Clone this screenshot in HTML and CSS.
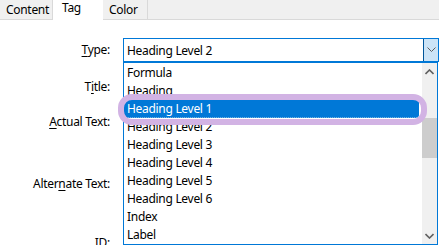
FILE: index.html
```html
<!DOCTYPE html>
<html lang="en">
<head>
    <meta charset="UTF-8">
    <title>Tag Properties</title>
    <link rel="stylesheet" href="styles.css">
</head>
<body>
    <div class="tabs">
        <div class="tab">Content</div>
        <div class="tab active">Tag</div>
        <div class="tab">Color</div>
        <div class="tab-fill"></div>
    </div>

    <div class="form">
        <label class="label"><u>T</u>ype:</label>
        <div class="field">
            <div class="combo">
                <span class="combo-value">Heading Level 2</span>
                <span class="combo-button">
                    <svg width="9" height="6" viewBox="0 0 9 6"><polyline points="0.5,0.5 4.5,4.5 8.5,0.5" fill="none" stroke="#5f5f5f" stroke-width="1"/></svg>
                </span>
                <div class="dropdown">
                    <ul class="options">
                        <li>Formula</li>
                        <li>Heading</li>
                        <li class="selected">Heading Level 1</li>
                        <li>Heading Level 2</li>
                        <li>Heading Level 3</li>
                        <li>Heading Level 4</li>
                        <li>Heading Level 5</li>
                        <li>Heading Level 6</li>
                        <li>Index</li>
                        <li>Label</li>
                    </ul>
                    <div class="scrollbar">
                        <span class="arrow">
                            <svg width="9" height="6" viewBox="0 0 9 6"><polyline points="0.5,5 4.5,1 8.5,5" fill="none" stroke="#606060" stroke-width="1.6"/></svg>
                        </span>
                        <div class="track"><div class="thumb"></div></div>
                        <span class="arrow">
                            <svg width="9" height="6" viewBox="0 0 9 6"><polyline points="0.5,1 4.5,5 8.5,1" fill="none" stroke="#606060" stroke-width="1.6"/></svg>
                        </span>
                    </div>
                    <div class="callout"></div>
                </div>
            </div>
        </div>
        <label class="label">T<u>i</u>tle:</label>
        <div class="field"></div>
        <label class="label"><u>A</u>ctual Text:</label>
        <div class="field"></div>
        <label class="label">Alter<u>n</u>ate Text:</label>
        <div class="field"></div>
        <label class="label">ID:</label>
        <div class="field"></div>
    </div>
</body>
</html>
```

FILE: styles.css
```css
body {
    margin: 0;
    font-family: 'Segoe UI', 'Noto Sans', 'Liberation Sans', sans-serif;
    font-size: 12px;
    letter-spacing: -0.3px;
    color: #000;
    background: #fff;
    overflow: hidden;
}

u {
    text-decoration-thickness: 1px;
    text-underline-offset: 2px;
}

.tabs {
    display: flex;
    height: 19px;
    background: #f0f0f0;
    border-bottom: 1px solid #d9d9d9;
}

.tab {
    padding: 0 5px 0 6px;
    line-height: 19px;
    border-right: 1px solid #d9d9d9;
}

.tab:first-child {
    width: 41px;
}

.tab.active {
    width: 36px;
    padding-left: 9px;
    line-height: 15px;
    background: #fff;
    margin-bottom: -1px;
    border-right: none;
}

.tab:nth-child(3) {
    width: 33px;
}

.tab-fill {
    flex: 1;
}

.form {
    display: grid;
    grid-template-columns: 110px 1fr;
    grid-template-rows: 24px 50px 20px 104px 14px;
    column-gap: 13px;
    padding-top: 18px;
}

.label {
    align-self: center;
    text-align: right;
    line-height: 14px;
}

.combo {
    position: relative;
    height: 22px;
    border: 1px solid #0078d7;
    display: flex;
    align-items: center;
}

.combo-value {
    flex: 1;
    padding-left: 3px;
}

.combo-button {
    width: 14px;
    height: 22px;
    background: #cce4f7;
    border-left: 1px solid #005499;
    display: flex;
    align-items: center;
    justify-content: center;
}

.dropdown {
    position: absolute;
    top: 23px;
    left: -1px;
    width: 313px;
    height: 181px;
    border: 1px solid #0078d7;
    background: #fff;
    display: flex;
}

.options {
    list-style: none;
    margin: 0;
    padding: 1px 0 0;
    flex: 1;
}

.options li {
    height: 18px;
    line-height: 18px;
    padding-left: 3px;
    white-space: nowrap;
}

.options li.selected {
    background: #0078d7;
    color: #fff;
    margin-right: 3px;
    border-radius: 0 3px 3px 0;
    box-sizing: border-box;
    border-bottom: 1px dotted #7fb8e8;
}

.scrollbar {
    width: 15px;
    background: #f0f0f0;
    display: flex;
    flex-direction: column;
}

.arrow {
    height: 17px;
    display: flex;
    align-items: center;
    justify-content: center;
}

.track {
    flex: 1;
    padding-top: 38px;
}

.thumb {
    height: 40px;
    background: #cdcdcd;
}

.callout {
    position: absolute;
    left: -6px;
    top: 31px;
    width: 297px;
    height: 19px;
    border: 6px solid #d2b3e4;
    border-radius: 14px;
    pointer-events: none;
}
```
